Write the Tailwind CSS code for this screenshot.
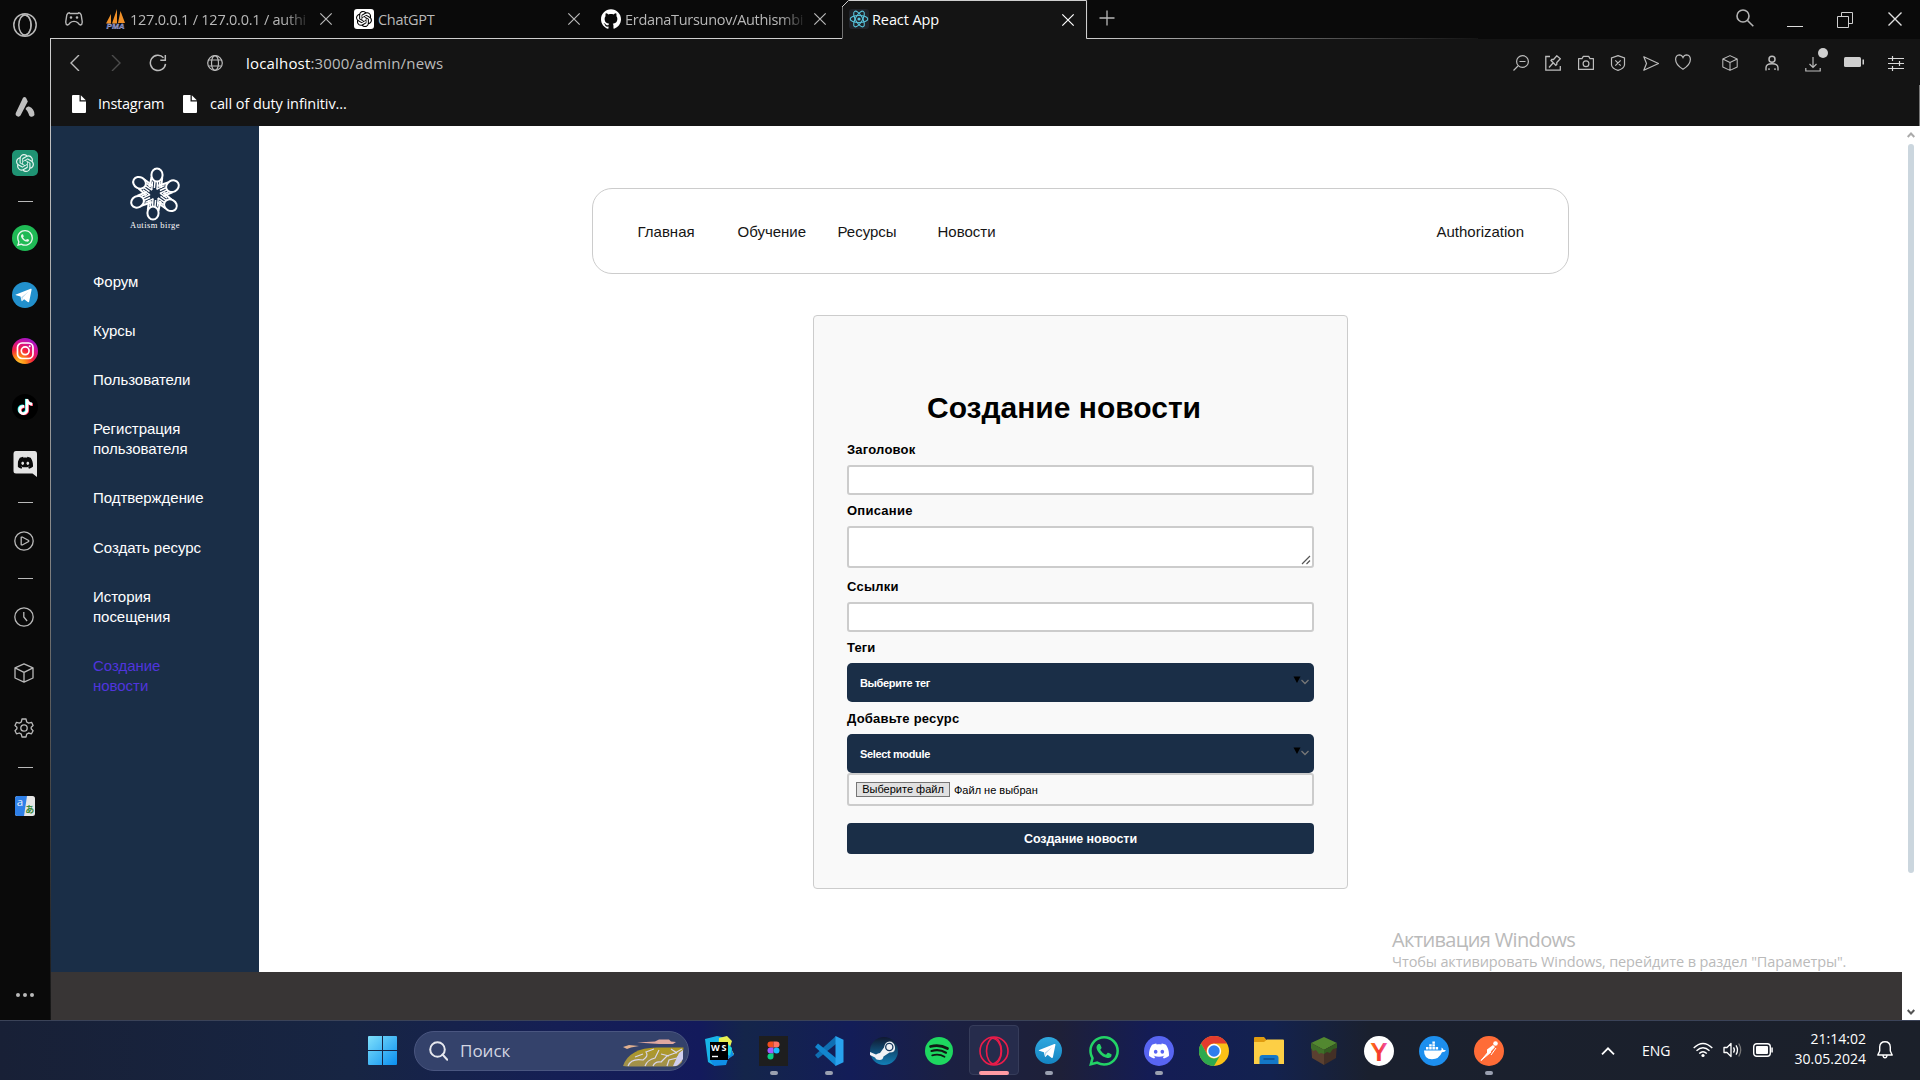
<!DOCTYPE html>
<html lang="ru">
<head>
<meta charset="utf-8">
<title>React App</title>
<script src="https://cdn.jsdelivr.net/npm/@tailwindcss/browser@4"></script>
</head>
<body class="w-[1920px] h-[1080px] overflow-hidden bg-[#0a0a0a] font-['Open_Sans','Noto_Sans',sans-serif]">
<svg class="hidden">
  <symbol id="openai" viewBox="0 0 24 24"><path fill="currentColor" d="M22.2819 9.8211a5.9847 5.9847 0 0 0-.5157-4.9108 6.0462 6.0462 0 0 0-6.5098-2.9A6.0651 6.0651 0 0 0 4.9807 4.1818a5.9847 5.9847 0 0 0-3.9977 2.9 6.0462 6.0462 0 0 0 .7427 7.0966 5.98 5.98 0 0 0 .511 4.9107 6.051 6.051 0 0 0 6.5146 2.9001A5.9847 5.9847 0 0 0 13.2599 24a6.0557 6.0557 0 0 0 5.7718-4.2058 5.9894 5.9894 0 0 0 3.9977-2.9001 6.0557 6.0557 0 0 0-.7475-7.0729zm-9.022 12.6081a4.4755 4.4755 0 0 1-2.8764-1.0408l.1419-.0804 4.7783-2.7582a.7948.7948 0 0 0 .3927-.6813v-6.7369l2.02 1.1686a.071.071 0 0 1 .038.052v5.5826a4.504 4.504 0 0 1-4.4945 4.4944zm-9.6607-4.1254a4.4708 4.4708 0 0 1-.5346-3.0137l.142.0852 4.783 2.7582a.7712.7712 0 0 0 .7806 0l5.8428-3.3685v2.3324a.0804.0804 0 0 1-.0332.0615L9.74 19.9502a4.4992 4.4992 0 0 1-6.1408-1.6464zM2.3408 7.8956a4.485 4.485 0 0 1 2.3655-1.9728V11.6a.7664.7664 0 0 0 .3879.6765l5.8144 3.3543-2.0201 1.1685a.0757.0757 0 0 1-.071 0l-4.8303-2.7865A4.504 4.504 0 0 1 2.3408 7.872zm16.5963 3.8558L13.1038 8.364 15.1192 7.2a.0757.0757 0 0 1 .071 0l4.8303 2.7913a4.4944 4.4944 0 0 1-.6765 8.1042v-5.6772a.79.79 0 0 0-.407-.667zm2.0107-3.0231l-.142-.0852-4.7735-2.7818a.7759.7759 0 0 0-.7854 0L9.409 9.2297V6.8974a.0662.0662 0 0 1 .0284-.0615l4.8303-2.7866a4.4992 4.4992 0 0 1 6.6802 4.66zM8.3065 12.863l-2.02-1.1638a.0804.0804 0 0 1-.038-.0567V6.0742a4.4992 4.4992 0 0 1 7.3757-3.4537l-.142.0805L8.704 5.459a.7948.7948 0 0 0-.3927.6813zm1.0976-2.3654l2.602-1.4998 2.6069 1.4998v2.9994l-2.5974 1.4997-2.6067-1.4997Z"/></symbol>
  <symbol id="whatsapp" viewBox="0 0 24 24"><path fill="currentColor" d="M17.472 14.382c-.297-.149-1.758-.867-2.03-.967-.273-.099-.471-.148-.67.15-.197.297-.767.966-.94 1.164-.173.199-.347.223-.644.075-.297-.15-1.255-.463-2.39-1.475-.883-.788-1.48-1.761-1.653-2.059-.173-.297-.018-.458.13-.606.134-.133.298-.347.446-.52.149-.174.198-.298.298-.497.099-.198.05-.371-.025-.52-.075-.149-.669-1.612-.916-2.207-.242-.579-.487-.5-.669-.51-.173-.008-.371-.01-.57-.01-.198 0-.52.074-.792.372-.272.297-1.04 1.016-1.04 2.479 0 1.462 1.065 2.875 1.213 3.074.149.198 2.096 3.2 5.077 4.487.709.306 1.262.489 1.694.625.712.227 1.36.195 1.871.118.571-.085 1.758-.719 2.006-1.413.248-.694.248-1.289.173-1.413-.074-.124-.272-.198-.57-.347m-5.421 7.403h-.004a9.87 9.87 0 01-5.031-1.378l-.361-.214-3.741.982.998-3.648-.235-.374a9.86 9.86 0 01-1.51-5.26c.001-5.45 4.436-9.884 9.888-9.884 2.64 0 5.122 1.03 6.988 2.898a9.825 9.825 0 012.893 6.994c-.003 5.45-4.437 9.884-9.885 9.884m8.413-18.297A11.815 11.815 0 0012.05 0C5.495 0 .16 5.335.157 11.892c0 2.096.547 4.142 1.588 5.945L.057 24l6.305-1.654a11.882 11.882 0 005.683 1.448h.005c6.554 0 11.89-5.335 11.893-11.893a11.821 11.821 0 00-3.48-8.413z"/></symbol>
  <symbol id="github" viewBox="0 0 24 24"><path fill="currentColor" d="M12 .297c-6.63 0-12 5.373-12 12 0 5.303 3.438 9.8 8.205 11.385.6.113.82-.258.82-.577 0-.285-.01-1.04-.015-2.04-3.338.724-4.042-1.61-4.042-1.61C4.422 18.07 3.633 17.7 3.633 17.7c-1.087-.744.084-.729.084-.729 1.205.084 1.838 1.236 1.838 1.236 1.07 1.835 2.809 1.305 3.495.998.108-.776.417-1.305.76-1.605-2.665-.3-5.466-1.332-5.466-5.93 0-1.31.465-2.38 1.235-3.22-.135-.303-.54-1.523.105-3.176 0 0 1.005-.322 3.3 1.23.96-.267 1.98-.399 3-.405 1.02.006 2.04.138 3 .405 2.28-1.552 3.285-1.23 3.285-1.23.645 1.653.24 2.873.12 3.176.765.84 1.23 1.91 1.23 3.22 0 4.61-2.805 5.625-5.475 5.92.42.36.81 1.096.81 2.22 0 1.606-.015 2.896-.015 3.286 0 .315.21.69.825.57C20.565 22.092 24 17.592 24 12.297c0-6.627-5.373-12-12-12"/></symbol>
  <symbol id="discord" viewBox="0 0 24 24"><path fill="currentColor" d="M20.317 4.3698a19.7913 19.7913 0 00-4.8851-1.5152.0741.0741 0 00-.0785.0371c-.211.3753-.4447.8648-.6083 1.2495-1.8447-.2762-3.68-.2762-5.4868 0-.1636-.3933-.4058-.8742-.6177-1.2495a.077.077 0 00-.0785-.037 19.7363 19.7363 0 00-4.8852 1.515.0699.0699 0 00-.0321.0277C.5334 9.0458-.319 13.5799.0992 18.0578a.0824.0824 0 00.0312.0561c2.0528 1.5076 4.0413 2.4228 5.9929 3.0294a.0777.0777 0 00.0842-.0276c.4616-.6304.8731-1.2952 1.226-1.9942a.076.076 0 00-.0416-.1057c-.6528-.2476-1.2743-.5495-1.8722-.8923a.077.077 0 01-.0076-.1277c.1258-.0943.2517-.1923.3718-.2914a.0743.0743 0 01.0776-.0105c3.9278 1.7933 8.18 1.7933 12.0614 0a.0739.0739 0 01.0785.0095c.1202.099.246.1981.3728.2924a.077.077 0 01-.0066.1276 12.2986 12.2986 0 01-1.873.8914.0766.0766 0 00-.0407.1067c.3604.698.7719 1.3628 1.225 1.9932a.076.076 0 00.0842.0286c1.961-.6067 3.9495-1.5219 6.0023-3.0294a.077.077 0 00.0313-.0552c.5004-5.177-.8382-9.6739-3.5485-13.6604a.061.061 0 00-.0312-.0286zM8.02 15.3312c-1.1825 0-2.1569-1.0857-2.1569-2.419 0-1.3332.9555-2.4189 2.157-2.4189 1.2108 0 2.1757 1.0952 2.1568 2.419 0 1.3332-.9555 2.4189-2.1569 2.4189zm7.9748 0c-1.1825 0-2.1569-1.0857-2.1569-2.419 0-1.3332.9554-2.4189 2.1569-2.4189 1.2108 0 2.1757 1.0952 2.1568 2.419 0 1.3332-.946 2.4189-2.1568 2.4189Z"/></symbol>
  <symbol id="tiktok" viewBox="0 0 24 24"><path fill="currentColor" d="M12.525.02c1.31-.02 2.61-.01 3.91-.02.08 1.53.63 3.09 1.75 4.17 1.12 1.11 2.7 1.62 4.24 1.79v4.03c-1.44-.05-2.89-.35-4.2-.97-.57-.26-1.1-.59-1.62-.93-.01 2.92.01 5.84-.02 8.75-.08 1.4-.54 2.79-1.35 3.94-1.31 1.92-3.58 3.17-5.91 3.21-1.43.08-2.86-.31-4.08-1.03-2.02-1.19-3.44-3.37-3.65-5.71-.02-.5-.03-1-.01-1.49.18-1.9 1.12-3.72 2.58-4.96 1.66-1.44 3.98-2.13 6.15-1.72.02 1.48-.04 2.96-.04 4.44-.99-.32-2.15-.23-3.02.37-.63.41-1.11 1.04-1.36 1.75-.21.51-.15 1.07-.14 1.61.24 1.64 1.82 3.02 3.5 2.87 1.12-.01 2.19-.66 2.77-1.61.19-.33.4-.67.41-1.06.1-1.79.06-3.57.07-5.36.01-4.03-.01-8.05.02-12.07z"/></symbol>
  <symbol id="cross" viewBox="0 0 16 16"><path d="M1.5 1.5l13 13M14.5 1.5l-13 13" fill="none" stroke="currentColor" stroke-width="1.4"/></symbol>
  <symbol id="cube" viewBox="0 0 20 20"><path d="M10 .8 19 4.9V15L10 19.2 1 15V4.9zM1 4.9 10 9.4l9-4.5M10 9.4v9.8" fill="none" stroke="currentColor" stroke-width="1.3" stroke-linejoin="round"/></symbol>
  <symbol id="file" viewBox="0 0 14 18"><path d="M1 0h6.5v6.5H14V17a1 1 0 0 1-1 1H1a1 1 0 0 1-1-1V1a1 1 0 0 1 1-1z" fill="#fff"/><path d="M8.8.2 13.8 5.3H8.8z" fill="#fff"/></symbol>
  <symbol id="plane" viewBox="0 0 26 26"><path fill="#fff" d="M5 12.6 19.6 6.7c.7-.2 1.2.2 1 1.1l-2.4 11.6c-.2.8-.7 1-1.4.6l-3.7-2.8-1.9 1.8c-.3.3-.6.3-.7-.2l-1-4.2-4.4-1.4c-.7-.2-.6-.5-.1-.6z"/><path d="M10.3 15.2 17.6 9.6 11.8 15.6l-.7 2.9z" fill="#b5d5ea"/></symbol>
  <symbol id="handring" viewBox="-26 -27 52 54">
    <g fill="none" stroke="#fff" stroke-width="2">
      <g id="petal"><ellipse cx="2" cy="-19" rx="5.600" ry="6.600"/><path d="M-3.400-17-5.500-7M7.200-16 6-6"/><path d="M-2.500-12.500-3.300-4M0-12.500-.6-6M2.500-12.500 2-4.500M5-12.500 4-7" stroke-width="1.500"/></g>
      <use href="#petal" transform="rotate(60)"/><use href="#petal" transform="rotate(120)"/><use href="#petal" transform="rotate(180)"/><use href="#petal" transform="rotate(240)"/><use href="#petal" transform="rotate(300)"/>
    </g>
  </symbol>
</svg>

<div class="flex flex-col h-full">
<div class="flex h-[1020px]">
  <!-- browser side panel -->
  <aside class="w-[50px] shrink-0 flex flex-col items-center text-[#b9b9b9]">
    <svg class="mt-[13px] w-6 h-6 shrink-0" viewBox="0 0 24 24" fill="none" stroke="currentColor" stroke-width="1.500"><circle cx="12" cy="12" r="11.200"/><ellipse cx="12" cy="12" rx="6.200" ry="10"/><path d="M9 1.500c5.500 0 8.800 4.700 8.800 10.500S14.500 22.500 9 22.500" stroke-width="1"/></svg>
    <svg class="mt-[60px] w-5 h-5 shrink-0" viewBox="0 0 20 20" fill="#c0c0c0"><path d="M8 .8Q9.500-.6 11 .8L12.800 4.500 5.500 18.500Q4 20.500 1.800 19 0 18 .9 15.800z"/><path d="M10.500 12q1-3 3.500-2.500 5.500 2 5.500 8.500-1.500 2.500-4.200 1.500-1.300-.6-1.800-3-.8-2.500-3-4.500z"/></svg>
    <div class="mt-[33px] w-[26px] h-[26px] shrink-0 rounded-[5px] bg-[#1f9373] flex items-center justify-center text-[#e4f3ee]"><svg class="w-[18px] h-[18px]"><use href="#openai"/></svg></div>
    <div class="mt-[25px] ml-px w-[15px] h-px shrink-0 bg-[#b9b9b9]"></div>
    <div class="mt-[23px] w-[26px] h-[26px] shrink-0 rounded-full bg-[#1fba55] flex items-center justify-center text-[#e8f5ec]"><svg class="w-4 h-4"><use href="#whatsapp"/></svg></div>
    <div class="mt-[31px] w-[26px] h-[26px] shrink-0 rounded-full bg-[#2290cc]"><svg class="w-[26px] h-[26px] -ml-px"><use href="#plane"/></svg></div>
    <svg class="mt-[30px] w-[26px] h-[26px] shrink-0" viewBox="0 0 26 26"><defs><radialGradient id="ig" cx=".25" cy="1" r="1.150"><stop offset="0" stop-color="#fc3"/><stop offset=".25" stop-color="#ff8a15"/><stop offset=".5" stop-color="#f3203f"/><stop offset=".75" stop-color="#d0109a"/><stop offset="1" stop-color="#8a1be0"/></radialGradient></defs><circle cx="13" cy="13" r="13" fill="url(#ig)"/><g fill="none" stroke="#fff" stroke-width="1.700"><rect x="5.500" y="5" width="15.500" height="15.500" rx="4.500"/><circle cx="13.200" cy="12.800" r="3.900"/></g><circle cx="17.700" cy="8.300" r="1" fill="#fff"/></svg>
    <svg class="mt-[30px] w-[26px] h-[26px] shrink-0" viewBox="0 0 26 26"><circle cx="13" cy="13" r="13" fill="#000"/><svg x="4.600" y="4.400" width="16" height="16" color="#25f4ee"><use href="#tiktok"/></svg><svg x="6" y="5.400" width="16" height="16" color="#fe2c55"><use href="#tiktok"/></svg><svg x="5.300" y="4.900" width="16" height="16" color="#fff"><use href="#tiktok"/></svg></svg>
    <svg class="mt-[31px] w-6 h-[26px] shrink-0" viewBox="0 0 24 26"><path d="M3 0h18.500Q24 0 24 3v23l-4.500-3.500H3Q.5 22.500.5 20V3Q.5 0 3 0z" fill="#e4e4e4"/><svg x="4.500" y="4" width="15.500" height="15.500" color="#0a0a0a"><use href="#discord"/></svg></svg>
    <div class="mt-[25px] ml-px w-[15px] h-px shrink-0 bg-[#b9b9b9]"></div>
    <svg class="mt-[28px] -ml-0.5 w-5 h-5 shrink-0" viewBox="0 0 20 20" fill="none" stroke="currentColor" stroke-width="1.300"><circle cx="10" cy="10" r="9.200"/><path d="M7.200 6.200v7.600h1.500l6-3.300v-1l-6-3.300z" stroke-linejoin="round"/></svg>
    <div class="mt-[27px] ml-px w-[15px] h-px shrink-0 bg-[#b9b9b9]"></div>
    <svg class="mt-[28px] -ml-0.5 w-5 h-5 shrink-0" viewBox="0 0 20 20" fill="none" stroke="currentColor" stroke-width="1.300"><circle cx="10" cy="10" r="9.200"/><path d="M9.800 5v5l3.300 4"/></svg>
    <svg class="mt-[36px] -ml-0.5 w-5 h-5 shrink-0"><use href="#cube"/></svg>
    <svg class="mt-[35px] -ml-0.5 w-5 h-5 shrink-0" viewBox="0 0 20 20" fill="none" stroke="currentColor" stroke-width="1.300" stroke-linejoin="round"><circle cx="10" cy="10" r="3.200"/><path d="M8 1h4l.7 3 2 1.100 2.900-.8 1.500 3.200L17.200 9.300v1.500l1.900 1.900-1.600 3.100-2.900-.8-1.900 1.100L12 19H8l-.7-2.900-2-1.100-2.800.8L1 12.700l1.900-1.900V9.300L1 7.500l1.500-3.200 2.900.8 1.900-1.100z"/></svg>
    <div class="mt-[29px] ml-px w-[15px] h-px shrink-0 bg-[#b9b9b9]"></div>
    <svg class="mt-[28px] w-5 h-5 shrink-0 overflow-visible" viewBox="0 0 20 20"><rect width="20" height="20" rx="2.500" fill="#e6e6e6"/><path d="M2.500 0H12L9 20H2.500Q0 20 0 17.500v-15Q0 0 2.500 0z" fill="#2f80e8"/><text x="1.800" y="10" font-size="11.500" font-family="Open Sans" fill="#e6eefc">a</text><text x="10.300" y="17" font-size="9" font-weight="bold" font-family="Noto Sans CJK JP" fill="#3a8a3c">あ</text></svg>
    <svg class="mt-[176px] w-[18px] h-1.5 shrink-0" viewBox="0 0 18 6" fill="#b9b9b9"><circle cx="2" cy="3" r="2"/><circle cx="9" cy="3" r="2"/><circle cx="16" cy="3" r="2"/></svg>
  </aside>
  <div class="w-px shrink-0 mt-[38px] bg-linear-to-b from-[#cfcfcf] via-[#8a8a8a] to-[#151515]"></div>

  <div class="relative flex-1 flex flex-col">
    <!-- tab strip -->
    <div class="flex h-[39px] text-[14.5px] text-[#b8b8b8]">
      <div class="w-[791px] flex items-center border-b border-[#cfcfcf]">
        <svg class="ml-3.5 w-[18px] h-4 shrink-0" viewBox="0 0 18 16" fill="none" stroke="currentColor" stroke-width="1.400"><path d="M5 2.500 4.200 1.800Q2.500 1.800 1.800 4L.8 10.500Q.5 13.500 2.500 14q1.200 0 2.700-2.300 1.200-1.300 3.800-1.300t3.800 1.300Q14.300 14 15.500 14q2-.5 1.700-3.500L16.200 4Q15.500 1.800 13.800 1.800L13 2.500z"/><circle cx="6" cy="6.500" r=".6" fill="currentColor"/><circle cx="12" cy="6.500" r=".6" fill="currentColor"/></svg>
        <svg class="ml-[23px] w-5 h-5 shrink-0" viewBox="0 0 20 20"><path d="M0 14.500 5 5v9.500zM6 14.500 11 0v14.500zM12 14 14.500 2 19 14z" fill="#f09028"/><text x=".5" y="19.500" textLength="18" lengthAdjust="spacingAndGlyphs" font-size="8" font-weight="bold" font-style="italic" font-family="Liberation Sans" fill="#5560a0" stroke="#c6c8e8" stroke-width=".3">PMA</text></svg>
        <div class="ml-1 mt-px w-[181px] leading-6 whitespace-nowrap tracking-[-0.23px] mask-r-from-85%">127.0.0.1 / 127.0.0.1 / authi</div>
        <svg class="ml-2 w-3.5 h-3.5 shrink-0"><use href="#cross"/></svg>
        <div class="ml-[21px] w-5 h-5 shrink-0 rounded-[3px] bg-white text-black flex items-center justify-center"><svg class="w-4 h-4"><use href="#openai"/></svg></div>
        <div class="ml-1 mt-px w-[188px] leading-6 tracking-[-0.3px]">ChatGPT</div>
        <svg class="w-3.5 h-3.5 shrink-0 ml-px"><use href="#cross"/></svg>
        <svg class="ml-5 w-5 h-5 shrink-0 text-white"><use href="#github"/></svg>
        <div class="ml-1 mt-px w-[182px] leading-6 whitespace-nowrap tracking-[-0.3px] mask-r-from-85%">ErdanaTursunov/Authismbi</div>
        <svg class="ml-1.5 w-3.5 h-3.5 shrink-0"><use href="#cross"/></svg>
      </div>
      <div class="relative w-[246px] bg-[#141414] flex items-center text-white">
        <svg class="absolute inset-0 w-[246px] h-[39px]" viewBox="0 0 246 39" fill="none"><path d="M0 0H6L0 7z" fill="#0a0a0a"/><path d="M0 38.500V7L6.500.5H244.500V38.500H246" stroke="#cfcfcf"/></svg>
        <svg class="ml-[7px] -mt-px w-5 h-5 shrink-0 z-10" viewBox="-10 -10 20 20" fill="none" stroke="#58c4dc" stroke-width="1.100"><rect x="-10" y="-10" width="20" height="20" rx="3" fill="#20232a" stroke="none"/><ellipse rx="8.800" ry="3.500"/><ellipse rx="8.800" ry="3.500" transform="rotate(60)"/><ellipse rx="8.800" ry="3.500" transform="rotate(120)"/><circle r="1.600" fill="#58c4dc" stroke="none"/></svg>
        <div class="ml-[3px] mt-px w-[189px] leading-6 tracking-[-0.1px]">React App</div>
        <svg class="w-3.5 h-3.5 shrink-0"><use href="#cross"/></svg>
      </div>
      <div class="relative flex-1 flex items-center">
        <div class="absolute left-0 bottom-0 h-px w-[390px] bg-linear-to-r from-[#cfcfcf] to-[#141414]"></div>
        <svg class="ml-[11px] -mt-1 w-4 h-4" viewBox="0 0 16 16" stroke="currentColor" stroke-width="1.300"><path d="M8 .5v15M.5 8h15"/></svg>
        <svg class="ml-[621px] -mt-[3px] w-[18px] h-[18px]" viewBox="0 0 18 18" fill="none" stroke="#b4b4b4" stroke-width="1.600"><circle cx="7" cy="7" r="6"/><path d="M11.500 11.500 17.300 17.300"/></svg>
        <div class="ml-[33px] mt-3.5 w-4 h-px bg-[#dcdcdc]"></div>
        <svg class="ml-[34px] w-4 h-4" viewBox="0 0 16 16" fill="none" stroke="#cfcfcf"><path d="M.5 4.500h11v11H.5zM4.500 4.500v-4h11v11h-4"/></svg>
        <svg class="ml-[34px] -mt-px w-4 h-4 text-[#e0e0e0]"><use href="#cross"/></svg>
      </div>
    </div>
    <!-- address bar -->
    <div class="h-[46px] bg-[#141414] flex items-center text-[#bcbcbc] pt-px">
      <svg class="ml-[18px] w-3 h-4" viewBox="0 0 12 16" fill="none" stroke="currentColor" stroke-width="1.400"><path d="M10 0 2 8l8 8"/></svg>
      <svg class="ml-[29px] w-3 h-4" viewBox="0 0 12 16" fill="none" stroke="#4c4c4c" stroke-width="1.400"><path d="M2 0l8 8-8 8"/></svg>
      <svg class="ml-[27px] w-[18px] h-[18px]" viewBox="0 0 18 18" fill="none" stroke="currentColor" stroke-width="1.500"><path d="M14.500 3.700A7.600 7.600 0 1 0 16.500 9.800M16.300 1v5.200h-5"/></svg>
      <svg class="ml-10 w-4 h-4" viewBox="0 0 16 16" fill="none" stroke="currentColor" stroke-width="1.200"><circle cx="8" cy="8" r="7.300"/><ellipse cx="8" cy="8" rx="3.500" ry="7.300"/><path d="M1.500 5h13M1.500 11h13"/></svg>
      <div class="ml-[23px] w-[1267px] text-[15px] leading-6 tracking-[0.18px]"><span class="text-white">localhost</span>:3000/admin/news</div>
      <svg class="w-4 h-4" viewBox="0 0 16 16" fill="none" stroke="currentColor" stroke-width="1.200"><circle cx="9.500" cy="6.500" r="5.900"/><path d="M.5 15.500 5 11M6.500 6.500h6"/></svg>
      <svg class="ml-4 w-4 h-4" viewBox="0 0 16 16" fill="none" stroke="currentColor" stroke-width="1.300"><path d="M5 1.500H.8v13.700h14.500V11M4 12.500 8 8M6 5.500l4.800 4.800 1-.8V7.500l3.500-3.700L11.800.8 8.500 4.500H6.800z"/></svg>
      <svg class="ml-[17px] w-4 h-4" viewBox="0 0 16 16" fill="none" stroke="currentColor" stroke-width="1.200"><path d="M.6 3.600H4l1.300-2.200h5.400L12 3.600h3.400v10.800H.6z" stroke-linejoin="round"/><circle cx="8" cy="8.800" r="2.900"/></svg>
      <svg class="ml-4 w-4 h-4" viewBox="0 0 16 16" fill="none" stroke="currentColor" stroke-width="1.200"><path d="M8 .6 14.500 3v7q-.5 3.500-6.500 5.400Q2 13.500 1.500 10V3zM5.300 5.300l5.400 5.400M10.700 5.300l-5.400 5.400"/></svg>
      <svg class="ml-[17px] mt-px w-4 h-4" viewBox="0 0 16 16" fill="none" stroke="currentColor" stroke-width="1.200"><path d="M.8 1.800 15.500 8.500.8 15.200 3.500 8.500z" stroke-linejoin="round"/></svg>
      <svg class="ml-4 -mt-px w-4 h-4" viewBox="0 0 16 16" fill="none" stroke="currentColor" stroke-width="1.200"><path d="M8 15.300Q.6 10.800.6 5.300.8 1 4.300.8 6.800.8 8 3.500 9.200.8 11.700.8q3.500.2 3.700 4.500 0 5.500-7.400 10z"/></svg>
      <svg class="ml-[31px] mt-px w-4 h-4"><use href="#cube"/></svg>
      <svg class="ml-[26px] mt-px w-4 h-4" viewBox="0 0 16 16" fill="none" stroke="currentColor" stroke-width="1.500"><circle cx="8" cy="4.300" r="3"/><path d="M2 15.500v-2.700q0-4 6-4t6 4v2.700M5 13.200V15M11 13.200V15" stroke-width="1.400"/></svg>
      <div class="relative ml-[25px]"><svg class="w-4 h-4 mt-0.5" viewBox="0 0 16 16" fill="none" stroke="currentColor" stroke-width="1.200"><path d="M8 1v10.500M4.500 8 8 11.500 11.500 8M.8 12v3h14.400v-3"/></svg><span class="absolute -top-[6px] left-[13px] w-2.5 h-2.5 rounded-full bg-[#cfcfcf]"></span></div>
      <svg class="ml-[23px] -mt-px w-5 h-2.5" viewBox="0 0 20 10" fill="#cfcfcf"><rect width="17" height="10" rx="1.500"/><rect x="18.500" y="2.500" width="1.500" height="5"/></svg>
      <svg class="ml-6 w-4 h-4" viewBox="0 0 16 16" stroke="#d8d8d8" stroke-width="1.200"><path d="M0 3.500h16M0 8.500h16M0 13.500h16M4.500 1v5M11.500 6v5M4.500 11v5"/></svg>
    </div>
    <!-- bookmarks -->
    <div class="h-[41px] bg-[#141414] flex items-center text-white text-[14.5px] border-r border-[#777] pb-[3px]">
      <svg class="ml-[21px] w-3.5 h-[18px]"><use href="#file"/></svg>
      <div class="ml-3 w-[85px] leading-6 tracking-[-0.25px]">Instagram</div>
      <svg class="w-3.5 h-[18px]"><use href="#file"/></svg>
      <div class="ml-[13px] leading-6 tracking-[-0.07px]">call of duty infinitiv...</div>
    </div>

    <!-- web page -->
    <div class="flex flex-1 bg-white font-['Liberation_Sans',Arial,sans-serif]">
      <div class="w-[1851px] flex flex-col">
        <div class="flex h-[846px]">
          <nav class="w-[208px] bg-[#1a2e47] text-white text-[15px] leading-5 flex flex-col">
            <div class="mt-[41px] ml-[78px] w-[52px] flex flex-col items-center">
              <svg class="w-[52px] h-[54px]"><use href="#handring"/></svg>
              <span class="-mt-px text-[8.500px] leading-[10px] font-['Liberation_Serif',serif] whitespace-nowrap tracking-[0.45px]">Autism birge</span>
            </div>
            <ul class="mt-[42px] ml-[42px] w-[120px] flex flex-col gap-[29px] tracking-[-0.04px]">
              <li>Форум</li><li>Курсы</li><li>Пользователи</li><li>Регистрация пользователя</li><li>Подтверждение</li><li class="pt-px">Создать ресурс</li><li>История<br>посещения</li><li class="text-[#5035dd]">Создание<br>новости</li>
            </ul>
          </nav>
          <main class="flex-1 flex flex-col items-center">
            <div class="mt-[62px] w-[977px] h-[86px] border border-[#ccc] rounded-[20px] flex items-center pl-[44.5px] pr-[44px] text-[15px] text-[#151515]">
              <a class="w-[100px] mt-0.5">Главная</a><a class="w-[100px] mt-0.5">Обучение</a><a class="w-[100px] mt-0.5">Ресурсы</a><a class="flex-1 mt-0.5">Новости</a><a class="mt-0.5">Authorization</a>
            </div>
            <form class="mt-[41px] w-[535px] h-[574px] border border-[#ccc] rounded bg-[#f9f9f9] px-[33px] flex flex-col text-[13px] font-bold text-black leading-4">
              <h1 class="mt-[74px] ml-20 text-[30px] leading-9 h-9 whitespace-nowrap">Создание новости</h1>
              <label class="mt-4 tracking-[0.22px]">Заголовок</label>
              <div class="mt-[7px] h-[30px] border-2 border-[#ccc] rounded-[3px] bg-white"></div>
              <label class="mt-2 tracking-[0.25px]">Описание</label>
              <div class="relative mt-[7px] h-[42px] border-2 border-[#ccc] rounded-[3px] bg-white"><svg class="absolute right-px bottom-px w-2.5 h-2.5" viewBox="0 0 10 10" stroke="#555" stroke-width="1.200"><path d="M1 9 9 1M5.500 9 9 5.500"/></svg></div>
              <label class="mt-[11px] tracking-[0.25px]">Ссылки</label>
              <div class="mt-[7px] h-[30px] border-2 border-[#ccc] rounded-[3px] bg-white"></div>
              <label class="mt-2 tracking-[0.1px]">Теги</label>
              <div class="mt-[7px] h-[39px] rounded-[5px] bg-[#1a2e47] flex items-center px-[13px] text-white text-[11px] relative tracking-[-0.36px]">Выберите тег
                <svg class="absolute right-[5px] top-[13px] w-4 h-2.5" viewBox="0 0 16 10"><path d="M.5.500h7L4 7z" fill="#000"/><path d="M8.500 4 12 7.500 15.500 4" fill="none" stroke="#777" stroke-width="1.300"/></svg></div>
              <label class="mt-[9px] tracking-[0.22px]">Добавьте ресурс</label>
              <div class="mt-[7px] h-[39px] rounded-[5px] bg-[#1a2e47] flex items-center px-[13px] text-white text-[11px] relative tracking-[-0.36px]">Select module
                <svg class="absolute right-[5px] top-[13px] w-4 h-2.5" viewBox="0 0 16 10"><path d="M.5.500h7L4 7z" fill="#000"/><path d="M8.500 4 12 7.500 15.500 4" fill="none" stroke="#777" stroke-width="1.300"/></svg></div>
              <div class="h-[33px] border-2 border-[#ccc] rounded-[3px] flex items-center pl-[7px] font-normal text-[11px]">
                <span class="w-[94px] h-[15px] border border-[#767676] bg-[#e1e1e1] leading-[13px] text-center whitespace-nowrap">Выберите файл</span><span class="ml-1">Файл не выбран</span>
              </div>
              <div class="mt-[17px] h-[31px] rounded bg-[#1a2e47] text-white flex items-center justify-center text-[12.500px] tracking-[-0.07px]">Создание новости</div>
            </form>
            <div class="mt-[39px] ml-[1133px] self-start whitespace-nowrap font-['Open_Sans','Noto_Sans',sans-serif] text-[#bababa]">
              <div class="text-[20px] leading-6 tracking-[-0.65px]">Активация Windows</div>
              <div class="text-[14.500px] leading-5 tracking-[-0.12px]">Чтобы активировать Windows, перейдите в раздел "Параметры".</div>
            </div>
          </main>
        </div>
        <footer class="h-12 bg-[#383535]"></footer>
      </div>
      <div class="flex-1 flex flex-col items-center">
        <svg class="mt-1.5 w-2 h-1.5" viewBox="0 0 8 6" fill="none" stroke="#aaa" stroke-width="2"><path d="M.7 5 4 1.500 7.300 5"/></svg>
        <div class="mt-1.5 w-1.5 h-[729px] rounded-full bg-[#cbd6de]"></div>
        <svg class="mt-[136px] w-2 h-1.5" viewBox="0 0 8 6" fill="none" stroke="#555" stroke-width="2"><path d="M.7 1 4 4.500 7.300 1"/></svg>
      </div>
    </div>
  </div>
</div>

<!-- taskbar -->
<div class="h-[60px] border-t border-[#3b4358] bg-[linear-gradient(90deg,#182036_0px,#172543_350px,#151f55_560px,#131a5c_700px,#14254a_745px,#131d58_850px,#1b2042_950px,#1e2038_1060px,#141c55_1150px,#13224f_1270px,#1a202e_1370px,#1b202a_1920px)] flex items-center text-white">
  <svg class="ml-[368px] w-[29px] h-[29px]" viewBox="0 0 29 29"><defs><linearGradient id="win" x2="1" y2="1"><stop offset="0" stop-color="#7fe0fb"/><stop offset="1" stop-color="#0a8ff0"/></linearGradient></defs><path d="M1 0h13v14H0V1Q0 0 1 0zM15 0h13q1 0 1 1v13H15zM0 15h14v14H1q-1 0-1-1zM15 15h14v13q0 1-1 1H15z" fill="url(#win)"/></svg>
  <div class="ml-[17px] w-[275px] h-10 rounded-full bg-[#34426b] border border-[#4a5680] flex items-center overflow-hidden">
    <svg class="ml-3.5 w-[19px] h-5" viewBox="0 0 19 20" fill="none" stroke="#e6e8ee" stroke-width="2"><circle cx="8.500" cy="8.500" r="7.300"/><path d="m13.500 13.500 4.800 5.300" stroke-linecap="round"/></svg>
    <div class="ml-3 text-[17px] leading-6 w-[163px] text-[#d3d6e2]">Поиск</div>
    <svg class="mt-1 w-[62px] h-[30px]" viewBox="0 0 62 30"><defs><linearGradient id="hill" y2="1" x2="0"><stop stop-color="#b09a20"/><stop offset="1" stop-color="#a09050"/></linearGradient></defs><path d="M14 4.500 32 3.500 36 1.500h10l2 2 5 .500-3 2-14 0z" fill="#e0a8a0"/><path d="M0 9l6-2 10 1-8 1.500L4 11z" fill="#e0b090"/><path d="M0 28Q6 10 34 9.500h26.500L59 24q-3 4-8 4.500H4z" fill="url(#hill)"/><path d="M5 28Q8 20 20 22q6-4 3-8l8-3M22 28q2-6 10-8l4-8M30 28q2-5 8-4l6-6 8-3 7-4M44 28l2-6 8-2 5-6M38 16l8 2M12 19l8-3M48 11l6 4" fill="none" stroke="#d9d6ea" stroke-width="1.200"/><path d="M50 28 56 15l4-3v9q-4 6-7 7z" fill="#d0cfee"/></svg>
  </div>
  <div class="ml-0.5 flex h-full">
    <div class="w-[55px] flex items-center justify-center"><svg class="w-[30px] h-[30px]" viewBox="0 0 30 30"><path d="M1 3 13 0l9 2-2 20-11 7-5-3z" fill="#18b4e8"/><path d="M15 2 23 0l5 5-2 6 4 7-6 5-10-6z" fill="#e8f050"/><path d="m20 10 7 2 3 7-6 4-2 6-12 1-4-6 8-6z" fill="#108fe8"/><path d="m24 8 4 4-2 8-6-4z" fill="#20d8e0"/><rect x="6" y="6" width="18" height="18" fill="#000"/><text x="7" y="15" font-size="9" font-weight="bold" font-family="Open Sans" fill="#fff" textLength="15.500">WS</text><path d="M8 20.500h6" stroke="#fff" stroke-width="1.400"/></svg></div>
    <div class="relative w-[55px] flex items-center justify-center"><svg class="w-[29px] h-[30px]" viewBox="0 0 29 30"><rect width="29" height="30" fill="#1e1e1e"/><path d="M14.500 5.500h-3a3 3 0 0 0 0 6h3z" fill="#f24e1e"/><path d="M14.500 5.500h3a3 3 0 0 1 0 6h-3z" fill="#ff7262"/><path d="M14.500 11.500h-3a3 3 0 0 0 0 6h3z" fill="#a259ff"/><circle cx="17.500" cy="14.500" r="3" fill="#1abcfe"/><path d="M14.500 17.500h-3a3 3 0 1 0 3 3z" fill="#0acf83"/></svg><span class="absolute left-6 bottom-[5px] w-2 h-1 rounded-full bg-[#9aa0b0]"></span></div>
    <div class="relative w-[55px] flex items-center justify-center"><svg class="w-[30px] h-[30px]" viewBox="0 0 30 30"><path d="M1 19 22 0v8L4 22.500z" fill="#0f6fb3"/><path d="M1 11 4 7.500 22 22v8z" fill="#1286cf"/><path d="m21.500 0 8 3.800v22.400l-8 3.800z" fill="#28a2ee"/></svg><span class="absolute left-6 bottom-[5px] w-2 h-1 rounded-full bg-[#9aa0b0]"></span></div>
    <div class="w-[55px] flex items-center justify-center"><svg class="w-7 h-7" viewBox="0 0 28 28"><defs><linearGradient id="stm" y2="1" x2="0"><stop stop-color="#101830"/><stop offset="1" stop-color="#1280b8"/></linearGradient></defs><circle cx="14" cy="14" r="14" fill="url(#stm)"/><path d="M0 15l6 2.500Q8 16 10 16l4-5.500q1-6 5.500-6t5.500 5.500-5.500 5.500l-6 4q-.5 3.500-4 3.500T5 20.500L0 18z" fill="#f0f2f5"/><circle cx="19.300" cy="10" r="3.600" fill="none" stroke="#14365c" stroke-width="1.300"/></svg></div>
    <div class="w-[55px] flex items-center justify-center"><svg class="w-7 h-7" viewBox="0 0 28 28"><circle cx="14" cy="14" r="14" fill="#1ed760"/><g fill="none" stroke="#101a14" stroke-linecap="round"><path d="M5.500 9.500q9-2.500 17 2" stroke-width="2.700"/><path d="M6.500 14q8-2.200 14.500 1.700" stroke-width="2.200"/><path d="M7.200 18.300q7-1.800 12.300 1.400" stroke-width="1.800"/></g></svg></div>
    <div class="relative w-[55px] flex items-center justify-center"><span class="absolute left-[3px] top-1 w-[50px] h-[50px] rounded bg-[#262c4c] border border-[#363c5a]"></span><svg class="relative w-[30px] h-[30px]" viewBox="0 0 30 30" fill="none" stroke="#ec1c4a" stroke-width="1.600"><circle cx="15" cy="15" r="14"/><ellipse cx="15" cy="15" rx="7.500" ry="13"/><path d="M11 2c7 0 11 6 11 13s-4 13-11 13" stroke-width="1.200"/></svg><span class="absolute left-[13px] bottom-[5px] w-[30px] h-1 rounded-full bg-[#ff9ba3]"></span></div>
    <div class="relative w-[55px] flex items-center justify-center"><span class="w-[27px] h-[27px] rounded-full bg-linear-to-b from-[#2fa8df] to-[#1485c2]"><svg class="w-[27px] h-[27px] -ml-px"><use href="#plane"/></svg></span><span class="absolute left-6 bottom-[5px] w-2 h-1 rounded-full bg-[#9aa0b0]"></span></div>
    <div class="w-[55px] flex items-center justify-center text-[#23d366]"><svg class="w-[30px] h-[30px]"><use href="#whatsapp"/></svg></div>
    <div class="relative w-[55px] flex items-center justify-center"><span class="w-[30px] h-[30px] rounded-full bg-[#5865f2] flex items-center justify-center"><svg class="w-5 h-5"><use href="#discord"/></svg></span><span class="absolute left-6 bottom-[5px] w-2 h-1 rounded-full bg-[#9aa0b0]"></span></div>
    <div class="w-[55px] flex items-center justify-center"><svg class="w-[30px] h-[30px]" viewBox="0 0 30 30"><circle cx="15" cy="15" r="15" fill="#fbc116"/><path d="M2 7.500A15 15 0 0 1 28 7.500H15a7.500 7.500 0 0 0-6.500 11.200z" fill="#e33b2e"/><path d="M2 7.500A15 15 0 0 0 15 30L21.500 18.700A7.500 7.500 0 0 1 8.500 18.700z" fill="#2da94f"/><circle cx="15" cy="15" r="7.200" fill="#fff"/><circle cx="15" cy="15" r="5.700" fill="#2f7ded"/></svg></div>
    <div class="w-[55px] flex items-center justify-center"><svg class="w-[30px] h-[27px]" viewBox="0 0 30 27"><path d="M0 1q0-1 1-1h9l3 3.500-2 3H0z" fill="#e09c10"/><path d="M0 5h10l3-2.500h16q1 0 1 1V27H0z" fill="#fdcf45"/><path d="M5.500 27v-6q0-3 3-3h13q3 0 3 3v6z" fill="#1478c8"/><path d="M9.500 22h11" stroke="#0d4d8c" stroke-width="1.500"/></svg></div>
    <div class="w-[55px] flex items-center justify-center"><svg class="w-7 h-7" viewBox="0 0 28 28"><path d="M14 0 27 6 14 13 1 6z" fill="#528830"/><path d="M1 6 14 13v15L2 21z" fill="#5a4030"/><path d="M27 6 14 13v15l12-7z" fill="#443026"/><path d="M1 6 14 13v4l-3-1-2 1-3-4-3 1-2-3z" fill="#3f6f28"/><path d="M27 6 14 13v4l3-2 3 1 3-4 4-1z" fill="#335d21"/></svg></div>
    <div class="w-[55px] flex items-center justify-center"><svg class="w-[30px] h-[30px]" viewBox="0 0 30 30"><defs><linearGradient id="ya" x2="1" y2="0"><stop stop-color="#ff7a1a"/><stop offset=".5" stop-color="#f5382c"/><stop offset="1" stop-color="#f05ad0"/></linearGradient></defs><circle cx="15" cy="15" r="15" fill="#fff"/><text x="15" y="24.500" text-anchor="middle" font-size="26" font-weight="bold" font-family="Liberation Sans" fill="url(#ya)">Y</text></svg></div>
    <div class="w-[55px] flex items-center justify-center"><svg class="w-[30px] h-[30px]" viewBox="0 0 30 30"><circle cx="15" cy="15" r="15" fill="#1d8fee"/><path d="M5 14.500h16.500q1.500-.5 1-3 2 1 2 2.500 1.500-.3 2.500.3-1 2-4 2-3 7-10 7-8 0-8-8.800z" fill="#fff"/><path d="M7 11h2.500v2.500H7zM10.200 11h2.500v2.500h-2.500zM13.400 11h2.500v2.500h-2.500zM16.600 11h2.500v2.500h-2.500zM10.200 8.200h2.500v2.300h-2.500zM13.400 8.200h2.500v2.300h-2.500zM13.400 5.500h2.500v2.300h-2.500z" fill="#fff"/></svg></div>
    <div class="relative w-[55px] flex items-center justify-center"><svg class="w-[30px] h-[30px]" viewBox="0 0 30 30"><circle cx="15" cy="15" r="15" fill="#ff6c37"/><path d="M13 13.500 19 9l2 2-5.500 6-2.500.5z" fill="#fff"/><circle cx="21.500" cy="7.500" r="2.300" fill="#fff"/><path d="M7 24.500 15 15l2 1z" fill="#fff" stroke="#fff"/><path d="m22 12-5 7" stroke="#fff"/></svg><span class="absolute left-6 bottom-[5px] w-2 h-1 rounded-full bg-[#9aa0b0]"></span></div>
  </div>
  <svg class="ml-[85px] w-3.5 h-2" viewBox="0 0 14 8" fill="none" stroke="#fff" stroke-width="1.800"><path d="M1 7.300 7 1.300l6 6"/></svg>
  <div class="ml-[27px] -mt-px w-[51px] text-[14px]">ENG</div>
  <svg class="-mt-0.5 w-5 h-4" viewBox="0 0 20 16" fill="none" stroke="#fff" stroke-width="1.400"><path d="M.7 6Q10-3 19.300 6M3.500 8.700q6.500-6 13 0M6.200 11.400q3.800-3.500 7.600 0"/><circle cx="10" cy="13.500" r="1.600" fill="#fff" stroke="none"/></svg>
  <svg class="ml-2.5 -mt-0.5 w-5 h-4" viewBox="0 0 20 16" fill="none" stroke="#fff" stroke-width="1.300"><path d="M1 5.500h3L8 1.500v13l-4-4H1z" stroke-linejoin="round"/><path d="M10.500 5.300q1.800 2.700 0 5.400M13 3.300q3 4.700 0 9.400"/><path d="M15.700 1.500q4 6.500 0 13" stroke="#777"/></svg>
  <svg class="ml-2.5 -mt-0.5 w-5 h-3.5" viewBox="0 0 20 14"><rect x=".7" y=".7" width="16.600" height="12.600" rx="3" fill="none" stroke="#fff" stroke-width="1.400"/><rect x="3" y="3" width="12" height="8" rx="1" fill="#fff"/><rect x="18.300" y="4.500" width="1.500" height="5" fill="#fff"/></svg>
  <div class="-mt-[3px] ml-[13px] w-20 text-right text-[14px] leading-5"><div>21:14:02</div><div>30.05.2024</div></div>
  <svg class="ml-[11px] -mt-0.5 w-4 h-[18px]" viewBox="0 0 16 18" fill="none" stroke="#fff" stroke-width="1.400" stroke-linejoin="round"><path d="M8 .8q5 0 5.300 5.200V10l1.900 4H.8l1.900-4V6Q3 .8 8 .8zM6 14.500q.3 2.300 2 2.300t2-2.300"/></svg>
</div>
</div>
</body>
</html>
